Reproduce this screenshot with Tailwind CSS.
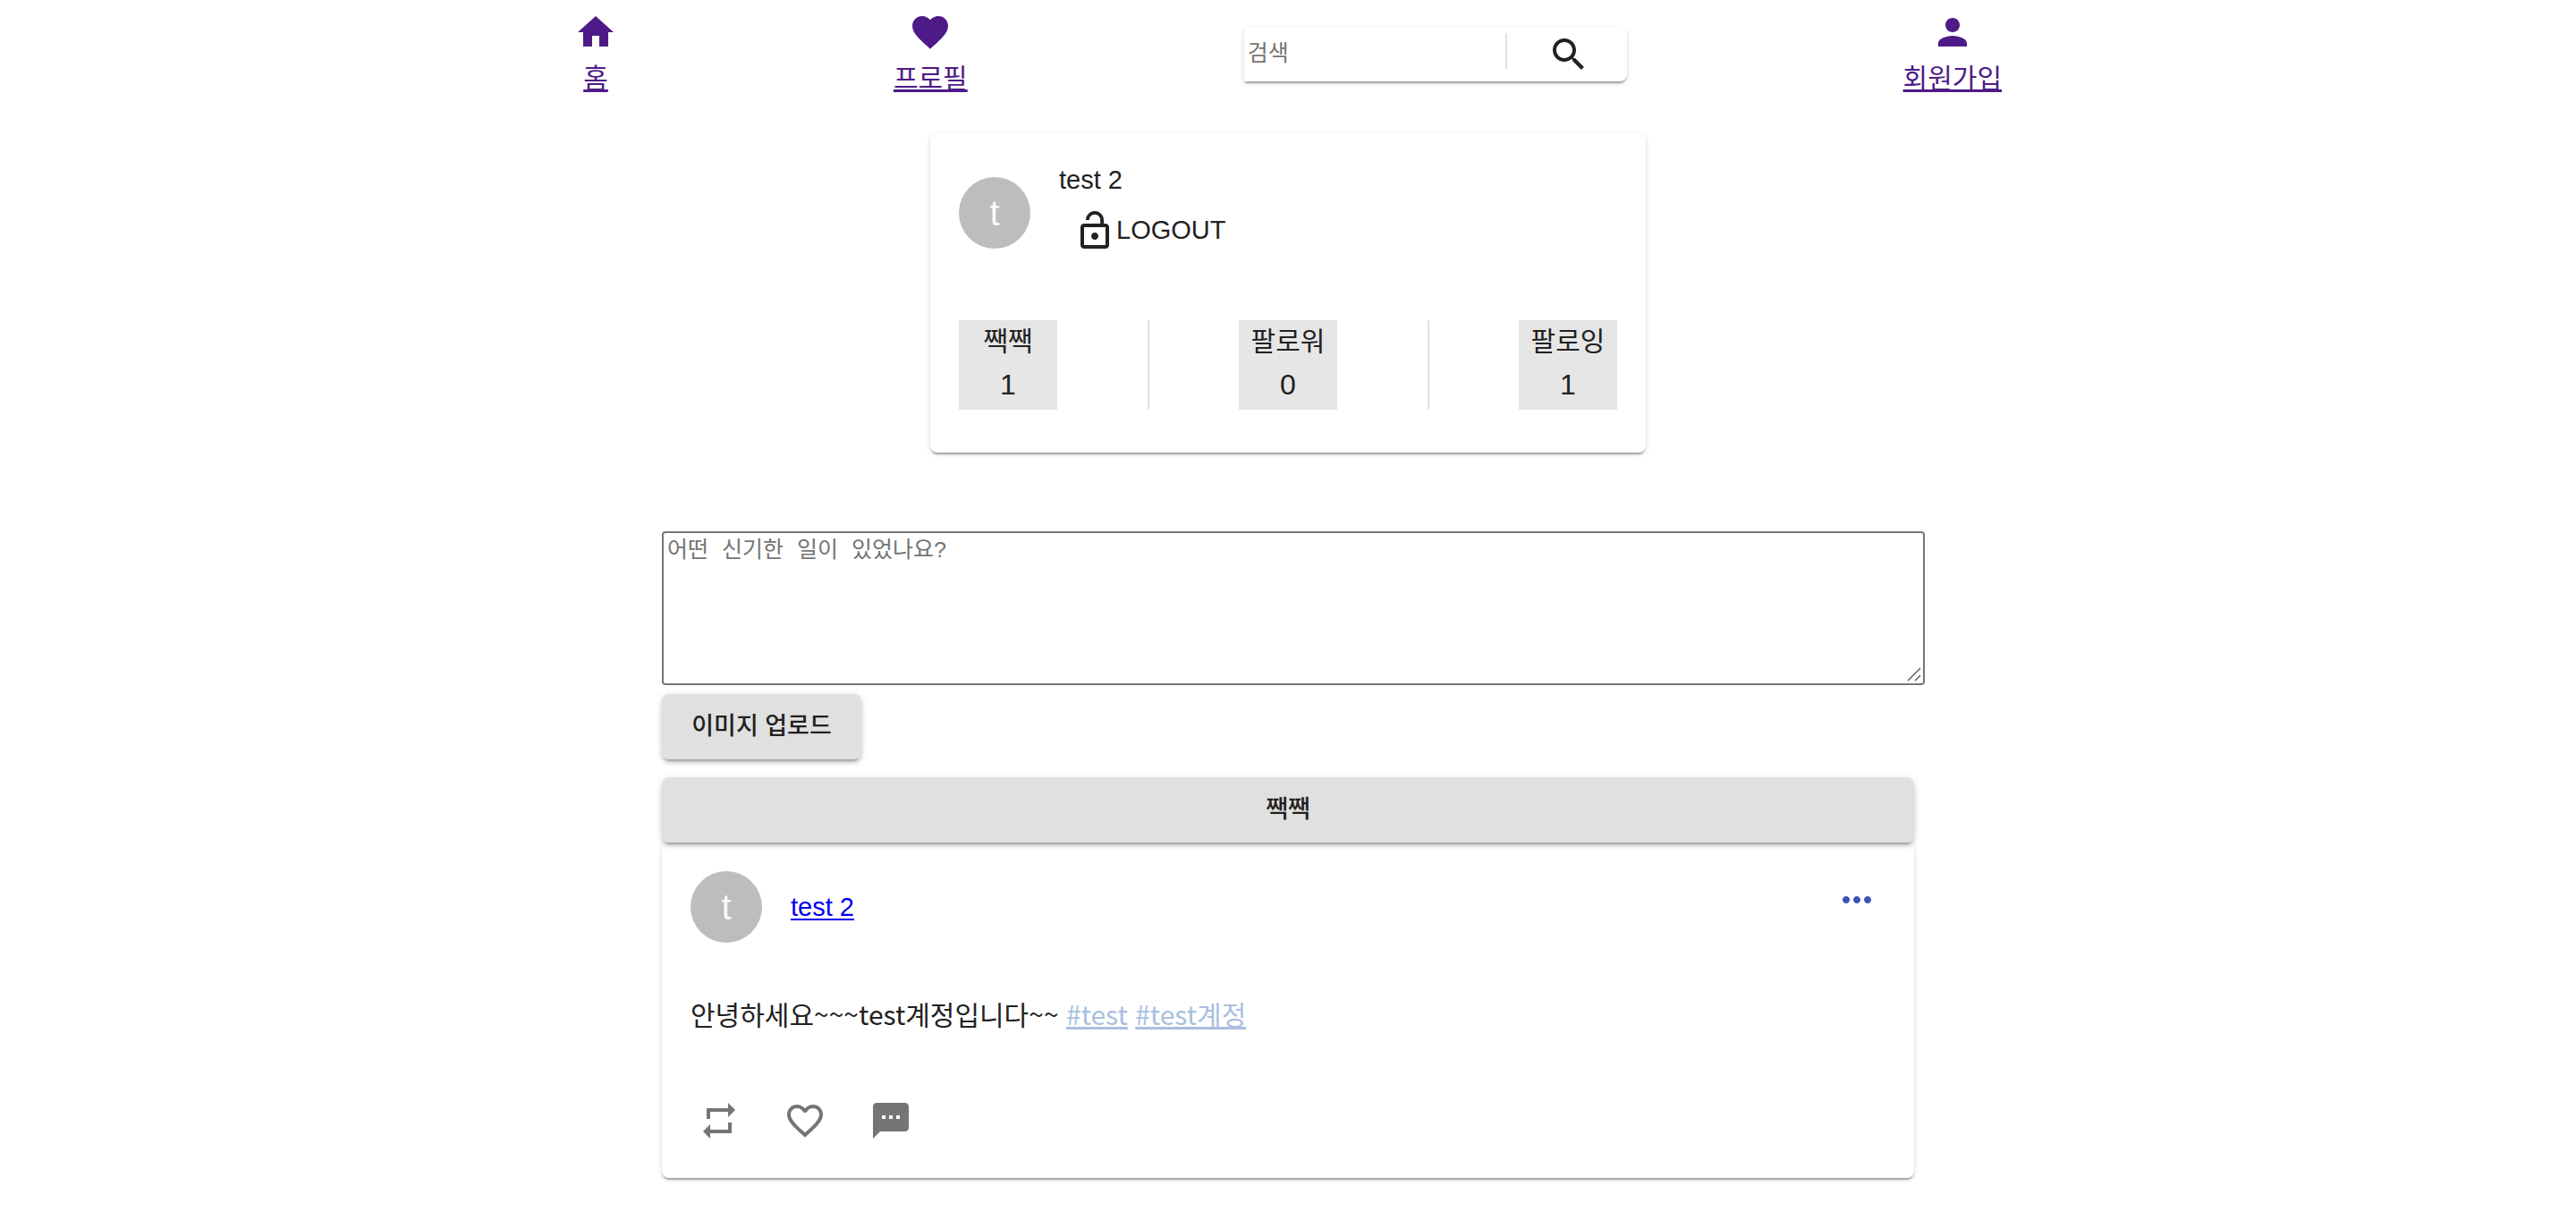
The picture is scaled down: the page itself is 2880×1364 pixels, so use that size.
<!DOCTYPE html>
<html lang="ko">
<head>
<meta charset="utf-8">
<title>짹짹</title>
<script src="https://cdn.jsdelivr.net/npm/@tailwindcss/browser@4"></script>
</head>
<body class="bg-white text-[#212121] font-['Liberation_Sans','Noto_Sans_CJK_KR',sans-serif]">

<header class="mx-auto flex max-w-[1596px] items-start justify-between pt-3 text-[30px] leading-14 text-[#4e1a87]">
  <a href="#" class="flex flex-col items-center">
    <svg class="size-12" viewBox="0 0 24 24" fill="currentColor"><path d="M10 20v-6h4v6h5v-8h3L12 3 2 12h3v8z"/></svg>
    <span class="underline decoration-3 underline-offset-2">홈</span>
  </a>
  <a href="#" class="flex flex-col items-center">
    <svg class="size-12" viewBox="0 0 24 24" fill="currentColor"><path d="M12 21.35l-1.45-1.32C5.4 15.36 2 12.28 2 8.5 2 5.42 4.42 3 7.5 3c1.74 0 3.41.81 4.5 2.09C13.09 3.81 14.76 3 16.5 3 19.58 3 22 5.42 22 8.5c0 3.78-3.4 6.86-8.55 11.54L12 21.35z"/></svg>
    <span class="underline decoration-3 underline-offset-2">프로필</span>
  </a>
  <form class="mt-[19px] flex h-[60px] w-[428px] items-start rounded-r-lg bg-white shadow-[0_4px_2px_-2px_rgba(0,0,0,0.2),0_2px_2px_0_rgba(0,0,0,0.14),0_2px_6px_0_rgba(0,0,0,0.12)]">
    <input type="text" aria-label="검색" placeholder="검색" class="h-14 min-w-0 flex-1 pl-1 text-[25px] leading-8 text-[#212121] outline-none placeholder:text-[#757575]">
    <span class="mt-[6px] h-10 w-[2px] bg-[#e0e0e0]"></span>
    <button type="button" aria-label="검색하기" class="flex h-[60px] w-[134px] items-center justify-center pl-1 text-[#212121]">
      <svg class="size-12" viewBox="0 0 24 24" fill="currentColor"><path d="M15.5 14h-.79l-.28-.27C15.41 12.59 16 11.11 16 9.5 16 5.91 13.09 3 9.5 3S3 5.91 3 9.5 5.91 16 9.5 16c1.61 0 3.09-.59 4.23-1.57l.27.28v.79l5 4.99L20.49 19l-4.99-5zm-6 0C7.01 14 5 11.99 5 9.5S7.01 5 9.5 5 14 7.01 14 9.5 11.99 14 9.5 14z"/></svg>
    </button>
  </form>
  <a href="#" class="flex flex-col items-center">
    <svg class="size-12" viewBox="0 0 24 24" fill="currentColor"><path d="M12 12c2.21 0 4-1.79 4-4s-1.79-4-4-4-4 1.79-4 4 1.79 4 4 4zm0 2c-2.67 0-8 1.34-8 4v2h16v-2c0-2.66-5.33-4-8-4z"/></svg>
    <span class="underline decoration-3 underline-offset-2">회원가입</span>
  </a>
</header>

<main class="mx-auto max-w-[1400px] pb-12">
  <section class="mx-auto mt-[33px] max-w-[800px] rounded-lg bg-white px-8 pt-8 pb-12 shadow-[0_4px_2px_-2px_rgba(0,0,0,0.2),0_2px_2px_0_rgba(0,0,0,0.14),0_2px_6px_0_rgba(0,0,0,0.12)]">
    <div class="flex items-center gap-8">
      <div class="flex size-20 items-center justify-center rounded-full bg-[#bdbdbd] text-[40px] text-[#fafafa]">t</div>
      <div>
        <p class="text-[29px] leading-10">test 2</p>
        <button type="button" class="flex h-[74px] items-center pl-4 text-[29px]">
          <svg class="size-12" viewBox="0 0 24 24" fill="currentColor"><path d="M12 17c1.1 0 2-.9 2-2s-.9-2-2-2-2 .9-2 2 .9 2 2 2zm6-9h-1V6c0-2.76-2.24-5-5-5S7 3.24 7 6h1.9c0-1.71 1.39-3.1 3.1-3.1 1.71 0 3.1 1.39 3.1 3.1v2H6c-1.1 0-2 .9-2 2v10c0 1.1.9 2 2 2h12c1.1 0 2-.9 2-2V10c0-1.1-.9-2-2-2zm0 12H6V10h12v10z"/></svg>
          LOGOUT
        </button>
      </div>
    </div>
    <div class="mt-[63px] flex h-[100px] justify-between text-center leading-12">
      <div class="w-[110px] bg-[#e6e6e6]"><p class="text-[30px]">짹짹</p><p class="text-[32px]">1</p></div>
      <div class="w-[2px] bg-[#e0e0e0]"></div>
      <div class="w-[110px] bg-[#e6e6e6]"><p class="text-[30px]">팔로워</p><p class="text-[32px]">0</p></div>
      <div class="w-[2px] bg-[#e0e0e0]"></div>
      <div class="w-[110px] bg-[#e6e6e6]"><p class="text-[30px]">팔로잉</p><p class="text-[32px]">1</p></div>
    </div>
  </section>

  <form class="mt-[88px]">
    <div class="relative w-[calc(100%+12px)]">
      <textarea aria-label="새 글" placeholder="어떤 신기한 일이 있었나요?" class="block h-[172px] w-full resize-none rounded border-2 border-[#767676] bg-white p-1 font-['Liberation_Mono','Noto_Sans_CJK_KR',monospace] text-[25px] leading-[34px] placeholder:text-[#757575]"></textarea>
      <svg class="pointer-events-none absolute right-1 bottom-1 size-4" viewBox="0 0 16 16" fill="none" stroke="#606060" stroke-width="1.5" aria-hidden="true"><path d="M1 15L15 1M9 15l6-6"/></svg>
    </div>
    <button type="button" class="mt-[10px] block h-[73px] min-w-[223px] rounded-lg bg-[#e0e0e0] px-8 text-[27px] font-medium shadow-[0_6px_2px_-4px_rgba(0,0,0,0.2),0_4px_4px_0_rgba(0,0,0,0.14),0_2px_10px_0_rgba(0,0,0,0.12)]">이미지 업로드</button>
    <button type="submit" class="relative mt-5 block h-[73px] w-full rounded-lg bg-[#e0e0e0] px-8 text-[27px] font-medium shadow-[0_6px_2px_-4px_rgba(0,0,0,0.2),0_4px_4px_0_rgba(0,0,0,0.14),0_2px_10px_0_rgba(0,0,0,0.12)]">짹짹</button>
  </form>

  <article class="rounded-lg bg-white px-8 pt-8 pb-10 shadow-[0_4px_2px_-2px_rgba(0,0,0,0.2),0_2px_2px_0_rgba(0,0,0,0.14),0_2px_6px_0_rgba(0,0,0,0.12)]">
    <div class="flex items-center">
      <div class="mr-8 flex size-20 items-center justify-center rounded-full bg-[#bdbdbd] text-[40px] text-[#fafafa]">t</div>
      <a href="#" class="text-[29px] leading-10 text-[#0000ee] underline decoration-2 underline-offset-3">test 2</a>
      <button type="button" aria-label="더보기" class="mr-2 ml-auto self-start pt-2 text-[#3f51b5]">
        <svg class="size-12" viewBox="0 0 24 24" fill="currentColor"><path d="M6 10c-1.1 0-2 .9-2 2s.9 2 2 2 2-.9 2-2-.9-2-2-2zm12 0c-1.1 0-2 .9-2 2s.9 2 2 2 2-.9 2-2-.9-2-2-2zm-6 0c-1.1 0-2 .9-2 2s.9 2 2 2 2-.9 2-2-.9-2-2-2z"/></svg>
      </button>
    </div>
    <p class="mt-[54px] font-['Noto_Sans_CJK_KR',sans-serif] text-[30px] leading-[50px]">안녕하세요~~~test계정입니다~~ <a href="#" class="text-[#a9bfde] underline decoration-3 underline-offset-2">#test</a> <a href="#" class="text-[#a9bfde] underline decoration-3 underline-offset-2">#test계정</a></p>
    <div class="mt-[71px] flex gap-12 pl-2 text-[#757575]">
      <button type="button" aria-label="리트윗"><svg class="size-12" viewBox="0 0 24 24" fill="currentColor"><path d="M7 7h10v3l4-4-4-4v3H5v6h2V7zm10 10H7v-3l-4 4 4 4v-3h12v-6h-2v4z"/></svg></button>
      <button type="button" aria-label="좋아요"><svg class="size-12" viewBox="0 0 24 24" fill="currentColor"><path d="M16.5 3c-1.74 0-3.41.81-4.5 2.09C10.91 3.81 9.24 3 7.5 3 4.42 3 2 5.42 2 8.5c0 3.78 3.4 6.86 8.55 11.54L12 21.35l1.45-1.32C18.6 15.36 22 12.28 22 8.5 22 5.42 19.58 3 16.5 3zm-4.4 15.55l-.1.1-.1-.1C7.14 14.24 4 11.39 4 8.5 4 6.5 5.5 5 7.5 5c1.54 0 3.04.99 3.57 2.36h1.87C13.46 5.99 14.96 5 16.5 5c2 0 3.5 1.5 3.5 3.5 0 2.89-3.14 5.74-7.9 10.05z"/></svg></button>
      <button type="button" aria-label="댓글"><svg class="size-12" viewBox="0 0 24 24" fill="currentColor"><path d="M20 2H4c-1.1 0-1.99.9-1.99 2L2 22l4-4h14c1.1 0 2-.9 2-2V4c0-1.1-.9-2-2-2zM9 11H7V9h2v2zm4 0h-2V9h2v2zm4 0h-2V9h2v2z"/></svg></button>
    </div>
  </article>
</main>
</body>
</html>
